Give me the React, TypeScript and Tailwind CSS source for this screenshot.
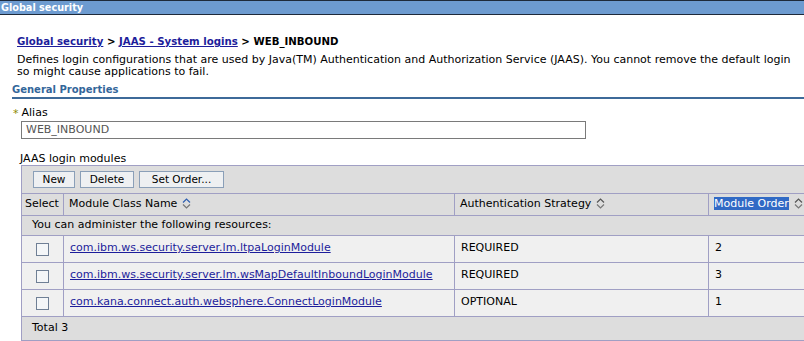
import React from "react";

const modules = [
  { name: "com.ibm.ws.security.server.lm.ltpaLoginModule", strategy: "REQUIRED", order: "2" },
  { name: "com.ibm.ws.security.server.lm.wsMapDefaultInboundLoginModule", strategy: "REQUIRED", order: "3" },
  { name: "com.kana.connect.auth.websphere.ConnectLoginModule", strategy: "OPTIONAL", order: "1" },
];

function SortIcon({ active = false }: { active?: boolean }) {
  return (
    <svg width="9" height="11" viewBox="0 0 9 11" className="inline-block ml-[5px] align-[-2px]">
      <path d="M1 4.5 L4.5 1 L8 4.5" fill="none" stroke={active ? "#2f5fb0" : "#555"} strokeWidth="1.2" />
      <path d="M1 6.5 L4.5 10 L8 6.5" fill="none" stroke="#777" strokeWidth="1.2" />
    </svg>
  );
}

function Btn({ label, w }: { label: string; w: string }) {
  return (
    <button className={`${w} h-[17px] bg-[#eef0f2] border border-[#8a9fb8] text-[10.5px] text-black leading-none`}>
      {label}
    </button>
  );
}

export default function App() {
  return (
    <div className="w-[804px] h-[341px] overflow-hidden bg-white font-['DejaVu_Sans',sans-serif] text-[11px] text-black">
      {/* portlet title */}
      <div className="h-[15px] bg-[#6d9bd0] border-t border-b border-[#1e2a3a] text-white font-bold text-[9.7px] leading-[13px] pl-[1px]">
        Global security
      </div>

      <div className="pl-[17px] pt-[20px]">
        <div className="font-bold text-[10.2px] leading-[14px] whitespace-nowrap">
          <a className="text-[#1d1d9b] underline">Global security</a>
          {" > "}
          <a className="text-[#1d1d9b] underline">JAAS - System logins</a>
          {" > "}WEB_INBOUND
        </div>
        <div className="mt-[5px] leading-[12px] whitespace-nowrap">
          Defines login configurations that are used by Java(TM) Authentication and Authorization Service (JAAS). You cannot remove the default login
        </div>
        <div className="leading-[12px] whitespace-nowrap">so might cause applications to fail.</div>
      </div>

      <div className="mt-[5px] ml-[12px] font-bold text-[10px] leading-[13px] text-[#33669a] border-b-2 border-[#3d6a99] pb-[1px]">
        General Properties
      </div>

      <div className="mt-[8px] ml-[13px] flex items-center gap-[3px] leading-[12px]">
        <span className="text-[#8a8a00] text-[11px] leading-none">*</span>
        <span>Alias</span>
      </div>
      <div className="ml-[21px] mt-[2px] w-[565px] h-[18px] border border-[#7a7a7a] px-[4px] text-[#555] leading-[16px]">
        WEB_INBOUND
      </div>

      <div className="ml-[20px] mt-[14px] leading-[12px]">JAAS login modules</div>

      <table className="ml-[21px] w-[830px] border-collapse table-fixed">
        <colgroup>
          <col className="w-[42px]" />
          <col className="w-[391px]" />
          <col className="w-[254px]" />
          <col />
        </colgroup>
        <tbody>
          <tr className="bg-[#dddddd] h-[28px]">
            <td colSpan={4} className="border border-[#a09fc4] pl-[11px]">
              <div className="flex gap-[5px]">
                <Btn label="New" w="w-[42px]" />
                <Btn label="Delete" w="w-[54px]" />
                <Btn label="Set Order..." w="w-[85px]" />
              </div>
            </td>
          </tr>
          <tr className="bg-[#dddddd] h-[22px]">
            <td className="border border-[#a09fc4] px-[3px]">Select</td>
            <td className="border border-[#a09fc4] px-[5px]">
              Module Class Name
              <SortIcon active />
            </td>
            <td className="border border-[#a09fc4] px-[5px]">
              Authentication Strategy
              <SortIcon />
            </td>
            <td className="border border-[#a09fc4] px-[5px] whitespace-nowrap">
              <span className="bg-[#316ac5] text-white">Module Order</span>
              <SortIcon />
            </td>
          </tr>
          <tr className="bg-[#dddddd] h-[20px]">
            <td colSpan={4} className="border border-[#a09fc4] px-[10px]">
              You can administer the following resources:
            </td>
          </tr>
          {modules.map((m) => (
            <tr key={m.name} className="bg-[#f0f0f0] h-[27px]">
              <td className="border border-[#a09fc4] text-center align-middle">
                <span className="inline-block w-[13px] h-[13px] border border-[#6f7f95] bg-[#f4f6f8] align-middle mt-[1px]" />
              </td>
              <td className="border border-[#a09fc4] px-[6px] align-top pt-[4px]">
                <a className="text-[#1d1d9b] underline">{m.name}</a>
              </td>
              <td className="border border-[#a09fc4] px-[6px] align-top pt-[4px]">{m.strategy}</td>
              <td className="border border-[#a09fc4] px-[6px] align-top pt-[4px]">{m.order}</td>
            </tr>
          ))}
          <tr className="bg-[#dddddd] h-[24px]">
            <td colSpan={4} className="border border-[#a09fc4] px-[10px]">
              Total 3
            </td>
          </tr>
        </tbody>
      </table>
    </div>
  );
}
